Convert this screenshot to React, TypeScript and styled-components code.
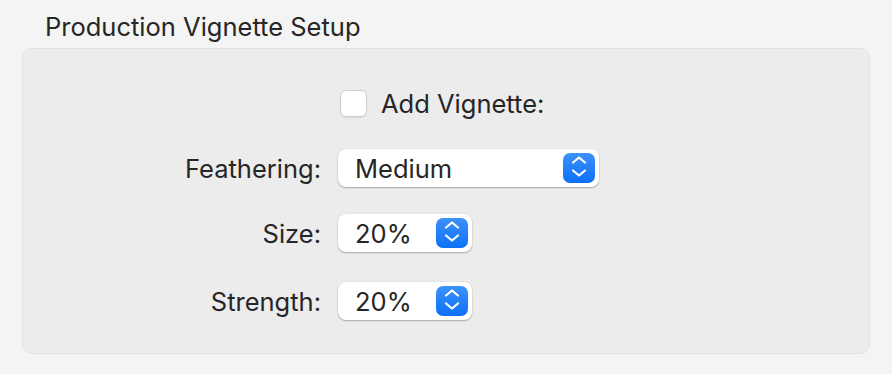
import React from "react";
import styled, { createGlobalStyle } from "styled-components";

const Global = createGlobalStyle`
  html, body { margin: 0; padding: 0; background: #f4f4f4; }
  body { font-family: Inter, "Noto Sans", sans-serif; color: #262626; -webkit-font-smoothing: antialiased; }
`;

const Page = styled.div`
  width: 892px;
  height: 374px;
  box-sizing: border-box;
  padding: 11px 22px 0 22px;
  background: #f4f4f4;
`;

const Title = styled.div`
  font-size: 25.5px;
  line-height: 32px;
  padding-left: 23px;
  height: 37px;
`;

const Panel = styled.div`
  box-sizing: border-box;
  width: 848px;
  height: 306px;
  background: #ececec;
  border: 1px solid #e2e2e2;
  border-radius: 10px;
  padding-top: 39px;
  display: flex;
  flex-direction: column;
`;

const Row = styled.div<{ $top: number; $h: number }>`
  display: grid;
  grid-template-columns: 298px auto;
  column-gap: 17px;
  align-items: center;
  height: ${(p) => p.$h}px;
  margin-top: ${(p) => p.$top}px;
`;

const Label = styled.div`
  font-size: 25.5px;
  text-align: right;
`;

const CheckWrap = styled.label`
  display: flex;
  align-items: center;
  gap: 14px;
  padding-left: 2px;
  font-size: 25.5px;
`;

const Box = styled.span`
  width: 27px;
  height: 27px;
  box-sizing: border-box;
  border-radius: 6px;
  background: #fff;
  border: 1px solid #cfcfcf;
  box-shadow: 0 0.5px 1px rgba(0, 0, 0, 0.08);
`;

const Popup = styled.div<{ $w: number }>`
  position: relative;
  box-sizing: border-box;
  width: ${(p) => p.$w}px;
  height: 38px;
  background: #fff;
  border-radius: 8px;
  box-shadow: 0 1px 1.5px rgba(0, 0, 0, 0.28), 0 0 0 0.5px rgba(0, 0, 0, 0.06);
  display: flex;
  align-items: center;
  justify-content: space-between;
  padding: 0 4px 0 17px;
  font-size: 25.5px;
`;

const Stepper = styled.span`
  width: 32px;
  height: 30px;
  border-radius: 7px;
  background: linear-gradient(#3d92fb, #0b6ff7);
  display: flex;
  align-items: center;
  justify-content: center;
`;

const Chevrons = () => (
  <svg width="32" height="30" viewBox="0 0 32 30" fill="none">
    <path d="M10 9.5 L16 4.5 L22 9.5" stroke="#fff" strokeWidth="2.2" strokeLinecap="round" strokeLinejoin="round" />
    <path d="M10 17.5 L16 22.5 L22 17.5" stroke="#fff" strokeWidth="2.2" strokeLinecap="round" strokeLinejoin="round" />
  </svg>
);

const Select = ({ value, width }: { value: string; width: number }) => (
  <Popup $w={width}>
    <span>{value}</span>
    <Stepper>
      <Chevrons />
    </Stepper>
  </Popup>
);

export default function App() {
  return (
    <>
      <Global />
      <Page>
        <Title>Production Vignette Setup</Title>
        <Panel>
          <Row $top={0} $h={27}>
            <span />
            <CheckWrap>
              <Box />
              <span>Add Vignette:</span>
            </CheckWrap>
          </Row>
          <Row $top={34} $h={38}>
            <Label>Feathering:</Label>
            <Select value="Medium" width={261} />
          </Row>
          <Row $top={27} $h={38}>
            <Label>Size:</Label>
            <Select value="20%" width={134} />
          </Row>
          <Row $top={30} $h={38}>
            <Label>Strength:</Label>
            <Select value="20%" width={134} />
          </Row>
        </Panel>
      </Page>
    </>
  );
}
